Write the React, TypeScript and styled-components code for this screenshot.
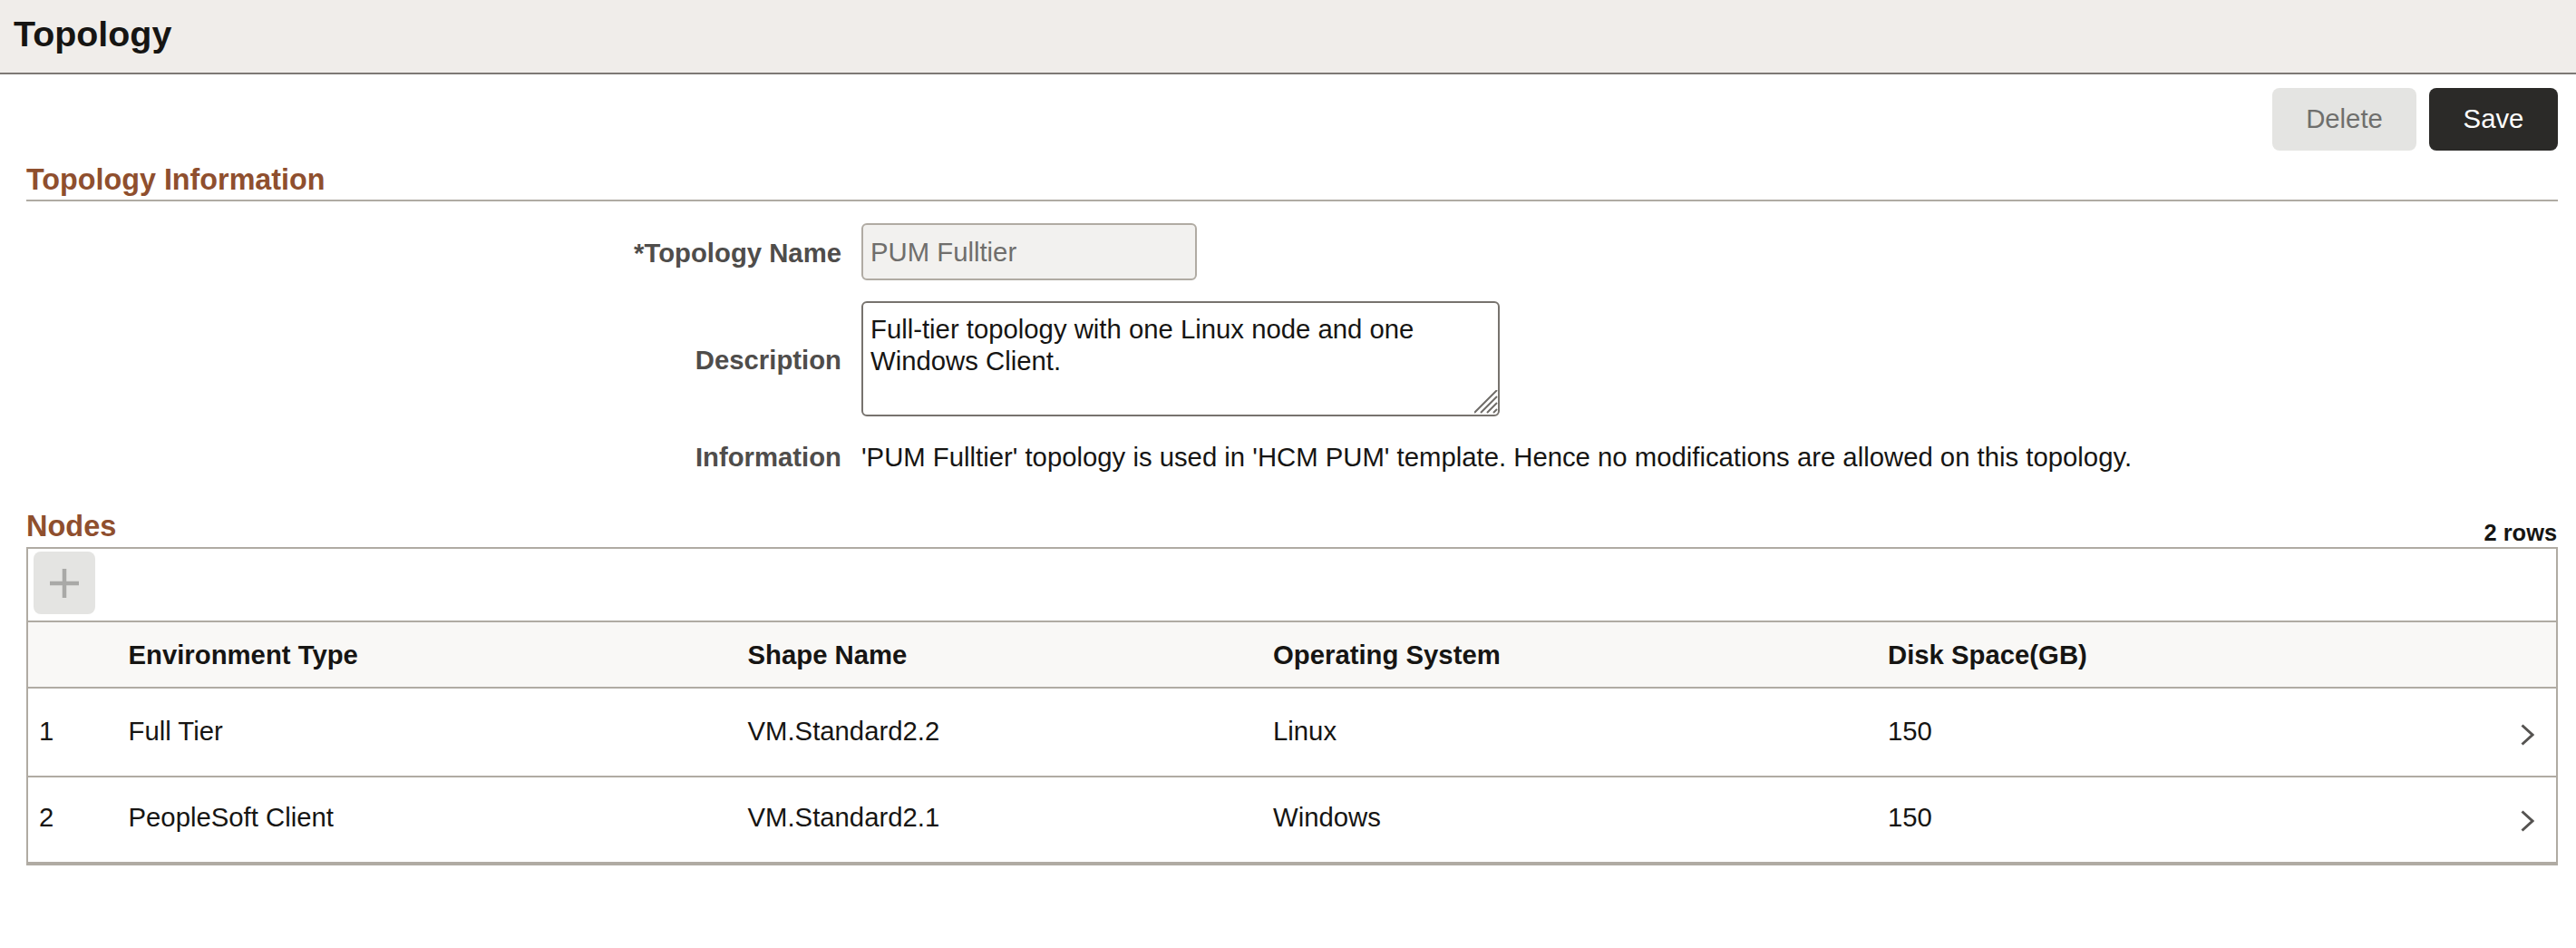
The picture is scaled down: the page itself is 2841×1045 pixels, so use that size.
import React from "react";
import styled, { createGlobalStyle } from "styled-components";

const colors = {
  ink: "#161513",
  label: "#4f4d4b",
  rust: "#8f4f2e",
  line: "#b0aba3",
  banner: "#f0edea",
  tableHead: "#f9f8f6",
};

const GlobalStyle = createGlobalStyle`
  html, body {
    margin: 0;
    padding: 0;
    background: #fff;
    color: ${colors.ink};
    font-family: "Liberation Sans", Arial, sans-serif;
    font-size: 29.3px;
    line-height: 35px;
  }
  * {
    box-sizing: border-box;
  }
`;

const Banner = styled.header`
  height: 82px;
  padding: 14px 0 0 15px;
  background: ${colors.banner};
  border-bottom: 2px solid #7d7975;
`;

const PageTitle = styled.h1`
  margin: 0;
  font-size: 39.4px;
  line-height: 46px;
  font-weight: 700;
`;

const Content = styled.main`
  padding: 15px 20px 0 29px;
`;

const Toolbar = styled.div`
  display: flex;
  justify-content: flex-end;
  gap: 14px;
`;

const ActionButton = styled.button<{ $primary?: boolean }>`
  width: ${(p) => (p.$primary ? "142px" : "159px")};
  height: 69px;
  padding: 0 0 2px;
  border: 0;
  border-radius: 8px;
  font: inherit;
  background: ${(p) => (p.$primary ? "#2b2a28" : "#e4e4e2")};
  color: ${(p) => (p.$primary ? "#fff" : "#6f6f6d")};
`;

const SectionHeading = styled.h2`
  margin: 12px 0 0;
  padding-bottom: 2px;
  font-size: 32.3px;
  line-height: 40px;
  font-weight: 700;
  color: ${colors.rust};
  border-bottom: 2px solid ${colors.line};
`;

const Form = styled.div`
  display: grid;
  grid-template-columns: 899px 1fr;
  column-gap: 22px;
  row-gap: 23px;
  align-items: center;
  margin-top: 24px;
`;

const Label = styled.label`
  padding-top: 1px;
  text-align: right;
  font-weight: 700;
  color: ${colors.label};
`;

const NameInput = styled.input`
  display: block;
  width: 370px;
  height: 63px;
  padding: 0 8px;
  font: inherit;
  color: #6f6e6c;
  background: #f2f1ef;
  border: 2px solid ${colors.line};
  border-radius: 6px;
  outline: none;
`;

const AreaWrap = styled.div`
  position: relative;
  width: 704px;
`;

const DescriptionArea = styled.textarea`
  display: block;
  width: 100%;
  height: 127px;
  padding: 11px 8px;
  font: inherit;
  color: ${colors.ink};
  background: #fff;
  border: 2px solid #77736e;
  border-radius: 6px;
  outline: none;
  resize: none;
`;

const ResizeGrip = styled.svg`
  position: absolute;
  right: 2px;
  bottom: 3px;
  pointer-events: none;
`;

const InfoText = styled.div`
  margin-top: 4px;
`;

const InfoLabel = styled(Label)`
  margin-top: 4px;
  padding-top: 0;
`;

const NodesHeader = styled.div`
  display: flex;
  justify-content: space-between;
  align-items: flex-end;
  margin-top: 39px;
  height: 43px;
`;

const NodesTitle = styled.h2`
  margin: 0 0 3px;
  font-size: 32.5px;
  line-height: 40px;
  font-weight: 700;
  color: ${colors.rust};
`;

const RowCount = styled.div`
  padding-right: 1px;
  font-size: 25.4px;
  line-height: 32px;
  font-weight: 700;
`;

const Table = styled.div`
  border: 2px solid ${colors.line};
  border-bottom-width: 4px;
`;

const TableTools = styled.div`
  height: 81px;
  padding: 3px 0 0 6px;
  border-bottom: 2px solid ${colors.line};
`;

const AddButton = styled.button`
  display: flex;
  align-items: center;
  justify-content: center;
  width: 68px;
  height: 69px;
  padding: 0;
  border: 0;
  border-radius: 8px;
  background: #e4e4e2;
`;

const gridColumns = "110.5px 683px 579.5px 678px 1fr 60px";

const HeadRow = styled.div`
  display: grid;
  grid-template-columns: ${gridColumns};
  align-items: center;
  height: 73px;
  background: ${colors.tableHead};
  border-bottom: 2px solid ${colors.line};
  font-weight: 700;
`;

const BodyRow = styled.div<{ $height: number; $top: number; $last?: boolean }>`
  display: grid;
  grid-template-columns: ${gridColumns};
  height: ${(p) => p.$height}px;
  padding-top: ${(p) => p.$top}px;
  border-bottom: ${(p) => (p.$last ? "0" : `2px solid ${colors.line}`)};
`;

const RowNumber = styled.div`
  padding-left: 12px;
`;

const ChevronCell = styled.div`
  display: flex;
  justify-content: flex-end;
  padding: 10px 24px 0 0;
`;

const Chevron = () => (
  <svg width="15" height="24" viewBox="0 0 15 24" fill="none">
    <path d="M1.5 1.5 L13 12 L1.5 22.5" stroke="#555351" strokeWidth="3" />
  </svg>
);

const PlusIcon = () => (
  <svg width="32" height="32" viewBox="0 0 32 32">
    <path d="M0 16 H32 M16 0 V32" stroke="#a9a9a7" strokeWidth="4.5" />
  </svg>
);

const nodes = [
  { env: "Full Tier", shape: "VM.Standard2.2", os: "Linux", disk: "150", height: 98, top: 29 },
  { env: "PeopleSoft Client", shape: "VM.Standard2.1", os: "Windows", disk: "150", height: 93, top: 26 },
];

export default function App(): React.ReactElement {
  return (
    <>
      <GlobalStyle />
      <Banner>
        <PageTitle>Topology</PageTitle>
      </Banner>
      <Content>
        <Toolbar>
          <ActionButton>Delete</ActionButton>
          <ActionButton $primary>Save</ActionButton>
        </Toolbar>
        <SectionHeading>Topology Information</SectionHeading>
        <Form>
          <Label>*Topology Name</Label>
          <NameInput value="PUM Fulltier" readOnly />
          <Label>Description</Label>
          <AreaWrap>
            <DescriptionArea
              readOnly
              value="Full-tier topology with one Linux node and one Windows Client."
            />
            <ResizeGrip width="26" height="26" viewBox="0 0 26 26" fill="none">
              <path
                d="M0 25 L25 0 M7 25 L25 7 M14 25 L25 14 M21 25 L25 21"
                stroke="#6f6c68"
                strokeWidth="2"
              />
            </ResizeGrip>
          </AreaWrap>
          <InfoLabel>Information</InfoLabel>
          <InfoText>
            'PUM Fulltier' topology is used in 'HCM PUM' template. Hence no modifications are
            allowed on this topology.
          </InfoText>
        </Form>
        <NodesHeader>
          <NodesTitle>Nodes</NodesTitle>
          <RowCount>2 rows</RowCount>
        </NodesHeader>
        <Table>
          <TableTools>
            <AddButton aria-label="Add row">
              <PlusIcon />
            </AddButton>
          </TableTools>
          <HeadRow>
            <div />
            <div>Environment Type</div>
            <div>Shape Name</div>
            <div>Operating System</div>
            <div>Disk Space(GB)</div>
          </HeadRow>
          {nodes.map((node, i) => (
            <BodyRow key={node.shape} $height={node.height} $top={node.top} $last={i === nodes.length - 1}>
              <RowNumber>{i + 1}</RowNumber>
              <div>{node.env}</div>
              <div>{node.shape}</div>
              <div>{node.os}</div>
              <div>{node.disk}</div>
              <ChevronCell>
                <Chevron />
              </ChevronCell>
            </BodyRow>
          ))}
        </Table>
      </Content>
    </>
  );
}
